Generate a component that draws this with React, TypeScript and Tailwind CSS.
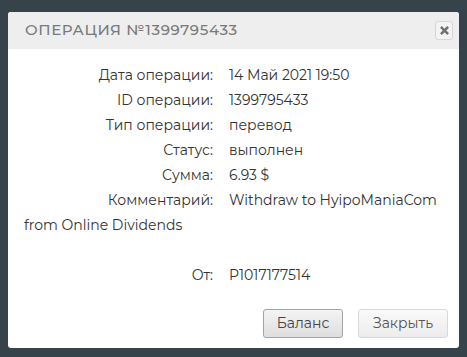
const rows: [string, string][] = [
  ["Дата операции:", "14 Май 2021 19:50"],
  ["ID операции:", "1399795433"],
  ["Тип операции:", "перевод"],
  ["Статус:", "выполнен"],
  ["Сумма:", "6.93 $"],
  ["Комментарий:", "Withdraw to HyipoManiaCom"],
];

export default function App() {
  return (
    <div
      className="h-[357px] w-[467px] bg-[#36434b] pt-[12px] pl-[8px]"
      style={{ fontFamily: "Montserrat, 'Noto Sans', 'Open Sans', sans-serif" }}
    >
      <div className="flex h-[336px] w-[451px] flex-col overflow-hidden rounded-[3px] bg-white">
        <div className="flex h-[37px] items-center justify-between bg-[#eeeeee] pl-[17px] pr-[6px]">
          <span className="text-[15px] font-medium tracking-[0.6px] text-[#7a7a7a]">ОПЕРАЦИЯ №1399795433</span>
          <button
            type="button"
            className="flex h-[19px] w-[18px] items-center justify-center rounded-[3px] border border-[#d6d6d6] bg-[#f3f3f3]"
          >
            <svg width="9" height="9" viewBox="0 0 10 10">
              <path d="M2 2 L8 8 M8 2 L2 8" stroke="#707070" strokeWidth="2.8" strokeLinecap="square" />
            </svg>
          </button>
        </div>
        <div className="flex flex-col px-[16px] pt-[14px] text-[14px] text-[#333]">
          {rows.map(([label, value]) => (
            <div key={label} className="flex h-[25px] items-center">
              <span className="w-[189px] text-right">{label}</span>
              <span className="pl-[16px]">{value}</span>
            </div>
          ))}
          <div className="flex h-[25px] items-center">from Online Dividends</div>
          <div className="h-[25px]" />
          <div className="flex h-[25px] items-center">
            <span className="w-[189px] text-right">От:</span>
            <span className="pl-[16px]">P1017177514</span>
          </div>
        </div>
        <div className="mt-auto flex justify-end gap-[15px] pr-[11px] pb-[10px] text-[14px] text-[#444]">
          <button
            type="button"
            className="h-[29px] w-[80px] rounded-[3px] border border-[#a3a3a3] bg-gradient-to-b from-[#f4f4f4] to-[#dedede]"
          >
            Баланс
          </button>
          <button
            type="button"
            className="h-[29px] w-[90px] rounded-[3px] border border-[#d9d9d9] bg-gradient-to-b from-[#fafafa] to-[#ececec] text-[#555]"
          >
            Закрыть
          </button>
        </div>
      </div>
    </div>
  );
}
